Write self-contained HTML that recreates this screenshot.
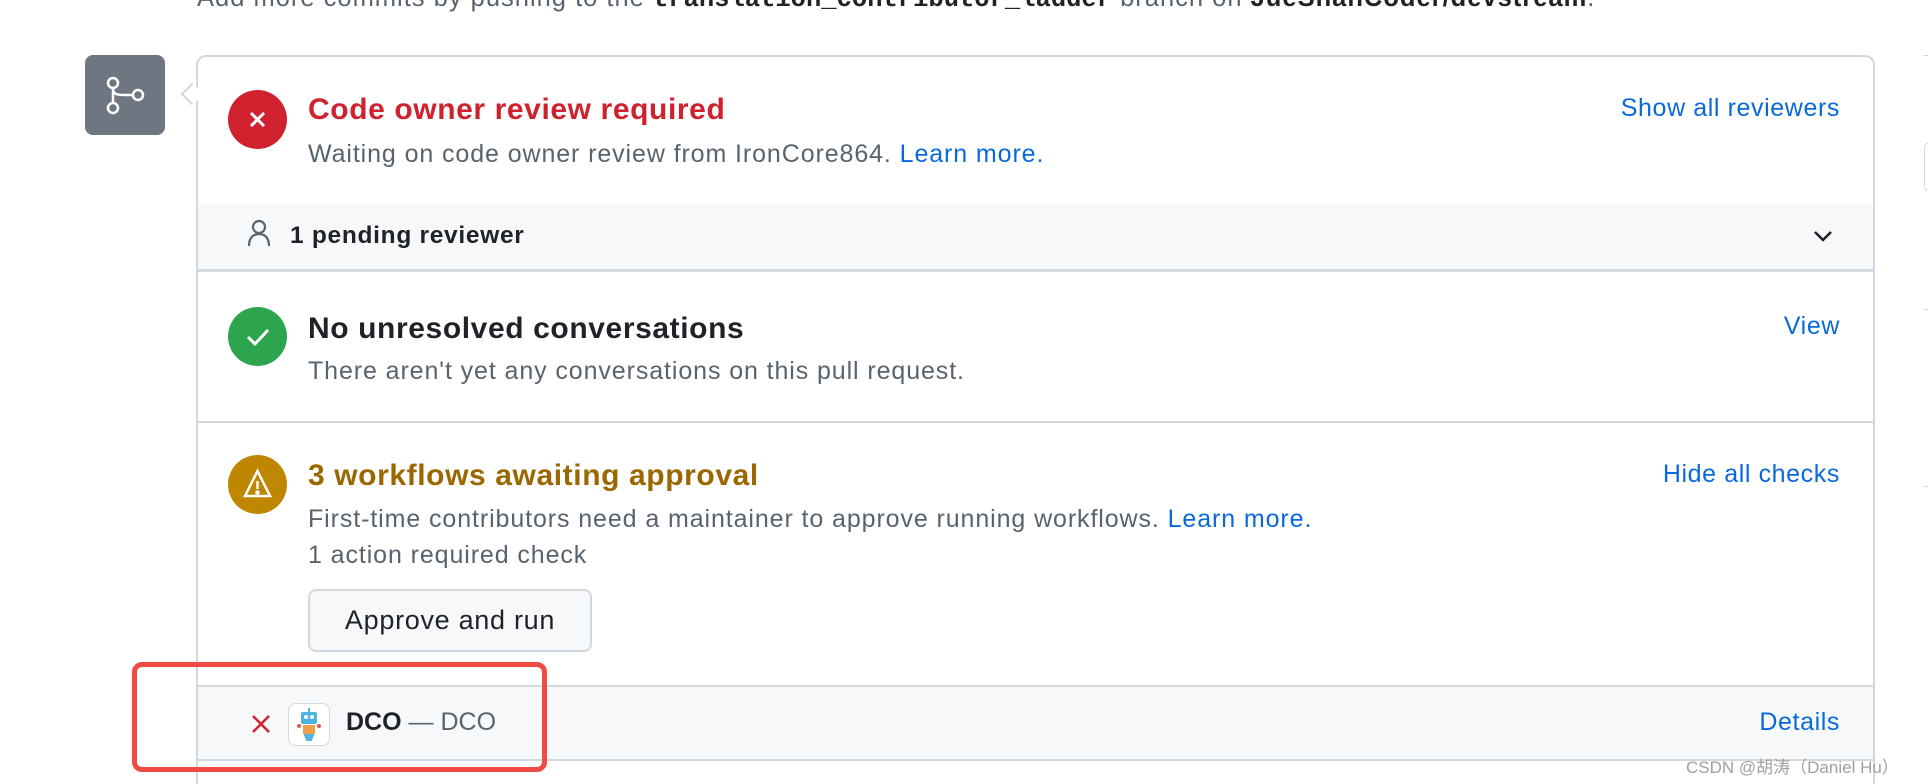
<!DOCTYPE html>
<html style="overflow:hidden;height:784px"><head><meta charset="utf-8"><style>
*{box-sizing:border-box;margin:0;padding:0}
body{width:1928px;height:784px;background:#fff;position:relative;overflow:hidden;font-family:"Liberation Sans","Noto Sans CJK SC",sans-serif;color:#1f2328}
.a{position:absolute;white-space:nowrap}
.blue{color:#0969da}
.sub{font-size:25px;letter-spacing:0.9px;color:#59636e}
.title{font-size:30px;letter-spacing:0.6px;font-weight:bold}
.lnk{font-size:25px;letter-spacing:0.6px}
.circ{position:absolute;width:59px;height:59px;border-radius:50%}
.line{position:absolute;background:#d1d9e0}
</style></head><body>
<div class="a sub" style="left:197px;top:-16px;font-size:25.5px;letter-spacing:1px">Add more commits by pushing to the <b style="font-family:'Liberation Mono',monospace;color:#1f2328;letter-spacing:0">translation_contributor_ladder</b> branch on <b style="color:#1f2328">JueShanCoder/devstream</b>.</div>

<div class="a" style="left:85px;top:55px;width:80px;height:80px;background:#6e7781;border-radius:8px">
<svg width="80" height="80" viewBox="0 0 80 80" fill="none" stroke="#fff" stroke-width="2.5"><circle cx="28" cy="28" r="5"/><circle cx="28" cy="53" r="5"/><circle cx="53" cy="40" r="5"/><path d="M28 33v15M28 34c0 6 6 6 12 6h8"/></svg></div>

<div class="a" style="left:196px;top:55px;width:1679px;height:729px;border:2px solid #d1d9e0;border-bottom:none;border-radius:10px 10px 0 0;background:#fff"></div>
<div class="a" style="left:184px;top:86px;width:16px;height:16px;background:#fff;border-left:2px solid #d1d9e0;border-bottom:2px solid #d1d9e0;transform:rotate(45deg)"></div>

<div class="circ" style="left:228px;top:90px;background:#cf222e"><svg width="59" height="59"><path d="M23 23l13 13M36 23l-13 13" stroke="#fff" stroke-width="3"/></svg></div>
<div class="a title" style="left:308px;top:93px;color:#cf222e">Code owner review required</div>
<div class="a sub" style="left:308px;top:140px">Waiting on code owner review from IronCore864. <span class="blue">Learn more.</span></div>
<div class="a blue lnk" style="right:88px;top:94px">Show all reviewers</div>

<div class="a" style="left:198px;top:203px;width:1675px;height:69px;background:#f6f8fa;border-bottom:3px solid #d1d9e0"></div>
<svg class="a" style="left:246px;top:218px" width="28" height="30" fill="none" stroke="#59636e" stroke-width="2.2"><circle cx="13" cy="9" r="6"/><path d="M3 28c0-8 4-12 10-12s10 4 10 12"/></svg>
<div class="a" style="left:290px;top:222px;font-size:24.5px;letter-spacing:0.7px;font-weight:bold">1 pending reviewer</div>
<svg class="a" style="left:1812px;top:229px" width="22" height="14" fill="none" stroke="#1f2328" stroke-width="2.5"><path d="M3 3l8 8 8-8"/></svg>

<div class="circ" style="left:228px;top:307px;background:#2da44e"><svg width="59" height="59"><path d="M20 30l7 7 13-14" fill="none" stroke="#fff" stroke-width="3"/></svg></div>
<div class="a title" style="left:308px;top:312px;color:#1f2328">No unresolved conversations</div>
<div class="a sub" style="left:308px;top:357px">There aren't yet any conversations on this pull request.</div>
<div class="a blue lnk" style="right:88px;top:312px">View</div>
<div class="line" style="left:198px;top:421px;width:1675px;height:2px"></div>

<div class="circ" style="left:228px;top:455px;background:#bf8700"><svg width="59" height="59" fill="none" stroke="#fff" stroke-width="2.5"><path d="M29.5 16L17 41h25z"/><path d="M29.5 26v8"/><circle cx="29.5" cy="37.5" r="1" fill="#fff"/></svg></div>
<div class="a title" style="left:308px;top:459px;color:#9a6700">3 workflows awaiting approval</div>
<div class="a sub" style="left:308px;top:505px">First-time contributors need a maintainer to approve running workflows. <span class="blue">Learn more.</span></div>
<div class="a sub" style="left:308px;top:541px">1 action required check</div>
<div class="a blue lnk" style="right:88px;top:460px">Hide all checks</div>
<div class="a" style="left:308px;top:589px;width:284px;height:63px;background:#f6f8fa;border:2px solid #d1d9e0;border-radius:8px;font-size:27px;letter-spacing:0.7px;text-align:center;line-height:59px;color:#1f2328">Approve and run</div>

<div class="a" style="left:198px;top:685px;width:1675px;height:76px;background:#f6f8fa;border-top:2px solid #d1d9e0;border-bottom:2px solid #d1d9e0"></div>
<svg class="a" style="left:250px;top:713px" width="22" height="22"><path d="M3 3l16 16M19 3L3 19" stroke="#cf222e" stroke-width="2.5"/></svg>
<div class="a" style="left:288px;top:703px;width:42px;height:43px;border:1px solid #d1d9e0;border-radius:8px;background:#fff">
<svg width="40" height="41"><rect x="12" y="8" width="16" height="12" rx="2" fill="#4fb3e0"/><circle cx="17" cy="13" r="2" fill="#fff"/><circle cx="23" cy="13" r="2" fill="#fff"/><rect x="14" y="21" width="12" height="9" fill="#f0a04b"/><path d="M20 4v4M16 31h8l-2 5h-4z" stroke="#4fb3e0" stroke-width="2" fill="#4fb3e0"/><circle cx="10" cy="22" r="2" fill="#e05a4f"/><circle cx="30" cy="22" r="2" fill="#e05a4f"/></svg></div>
<div class="a" style="left:346px;top:708px;font-size:25px;color:#59636e"><b style="color:#1f2328">DCO</b> — DCO</div>
<div class="a blue lnk" style="right:88px;top:708px">Details</div>

<div class="a" style="left:132px;top:662px;width:415px;height:110px;border:5px solid #f04a45;border-radius:10px"></div>

<div class="line" style="left:1923px;top:55px;width:5px;height:1px"></div>
<div class="line" style="left:1923px;top:309px;width:5px;height:1px"></div>
<div class="line" style="left:1923px;top:486px;width:5px;height:1px"></div>
<div class="a" style="left:1924px;top:143px;width:8px;height:48px;border:1px solid #d1d9e0;border-radius:6px"></div>

<div class="a" style="left:1686px;top:753px;font-size:17px;color:#a0a0a0">CSDN @胡涛（Daniel Hu）</div>
</body></html>
